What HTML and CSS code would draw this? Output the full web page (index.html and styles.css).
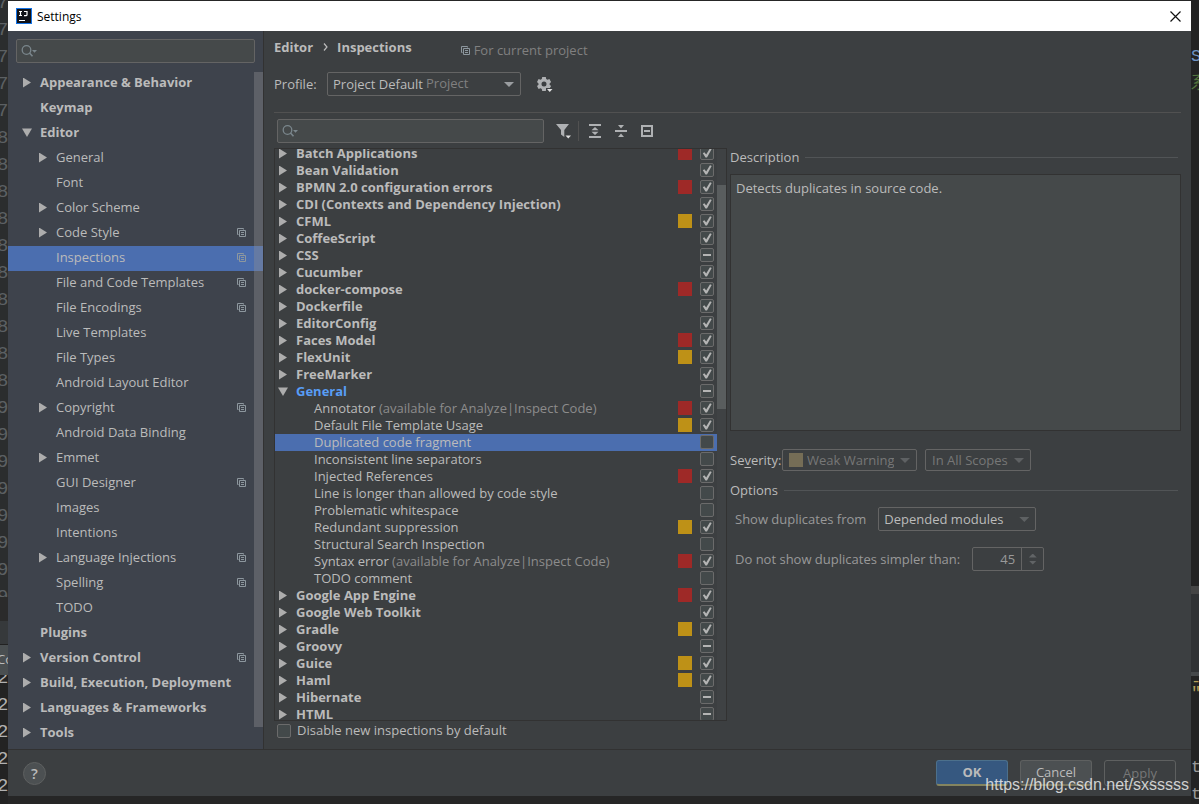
FILE: index.html
```html
<!DOCTYPE html>
<html lang="en">
<head>
<meta charset="utf-8">
<title>Settings</title>
<link rel="stylesheet" href="styles.css">
</head>
<body>
<svg class="sprite" aria-hidden="true">
  <symbol id="copy" viewBox="0 0 9 9"><path d="M1.500 6.500H.5V.5h6v1M2.500 2.500h6v6h-6zM4 4.500h3M4 6.500h3" fill="none" stroke="currentColor"/></symbol>
  <symbol id="search" viewBox="0 0 16 12"><circle cx="5.500" cy="5" r="4.300" fill="none" stroke="currentColor" stroke-width="1.300"/><path d="M8.500 8l3 3.300" stroke="currentColor" stroke-width="1.600"/><path d="M11 5h5l-2.500 2.800z" fill="currentColor"/></symbol>
</svg>
<div class="desktop">
  <div class="strip" aria-hidden="true">
    <div class="gutter dim"><i>7</i><i>7</i><i>7</i><i>7</i><i>7</i><i>8</i><i>8</i><i>8</i><i>8</i><i>8</i><i>8</i><i>8</i><i>8</i><i>8</i><i>8</i><i>9</i><i>9</i><i>9</i><i>9</i><i>9</i><i>9</i><i>9</i><i>9</i></div>
    <div class="toolbar-edge"></div>
    <div class="tab-edge">Co</div>
    <div class="gutter"><i>2</i><i>2</i><i>2</i><i>2</i><i>2</i></div>
  </div>

  <div class="window">
    <header class="titlebar">
      <svg class="logo" viewBox="0 0 16 16"><path d="M0 0h16v16H0z" fill="#1473e6"/><path d="M1 1h14v14H1z" fill="#101218"/><path d="M3 3.500h3M4.500 3.500v4M3 7.500h3M8 3.500h3v3.200q0 1-1.200 1H8M3 12.500h6" fill="none" stroke="#fff" stroke-width="1.200"/></svg>
      <h1>Settings</h1>
      <button class="close" aria-label="Close"><svg viewBox="0 0 11 11"><path d="M.5.5l10 10M10.500.5l-10 10" stroke="#111" stroke-width="1.200"/></svg></button>
    </header>

    <div class="content">
      <nav class="sidebar">
        <div class="field side-search"><svg><use href="#search"/></svg><input type="text" aria-label="Search settings"></div>
        <div class="nav-scroll">
          <ul class="nav">
            <li class="top"><span class="arrow"></span><a href="#">Appearance &amp; Behavior</a></li>
            <li class="top"><a href="#">Keymap</a></li>
            <li class="top"><span class="arrow open"></span><a href="#">Editor</a></li>
            <li><span class="arrow"></span><a href="#">General</a></li>
            <li><a href="#">Font</a></li>
            <li><span class="arrow"></span><a href="#">Color Scheme</a></li>
            <li><span class="arrow"></span><a href="#">Code Style</a><svg><use href="#copy"/></svg></li>
            <li class="selected"><a href="#">Inspections</a><svg><use href="#copy"/></svg></li>
            <li><a href="#">File and Code Templates</a><svg><use href="#copy"/></svg></li>
            <li><a href="#">File Encodings</a><svg><use href="#copy"/></svg></li>
            <li><a href="#">Live Templates</a></li>
            <li><a href="#">File Types</a></li>
            <li><a href="#">Android Layout Editor</a></li>
            <li><span class="arrow"></span><a href="#">Copyright</a><svg><use href="#copy"/></svg></li>
            <li><a href="#">Android Data Binding</a></li>
            <li><span class="arrow"></span><a href="#">Emmet</a></li>
            <li><a href="#">GUI Designer</a><svg><use href="#copy"/></svg></li>
            <li><a href="#">Images</a></li>
            <li><a href="#">Intentions</a></li>
            <li><span class="arrow"></span><a href="#">Language Injections</a><svg><use href="#copy"/></svg></li>
            <li><a href="#">Spelling</a><svg><use href="#copy"/></svg></li>
            <li><a href="#">TODO</a></li>
            <li class="top"><a href="#">Plugins</a></li>
            <li class="top"><span class="arrow"></span><a href="#">Version Control</a><svg><use href="#copy"/></svg></li>
            <li class="top"><span class="arrow"></span><a href="#">Build, Execution, Deployment</a></li>
            <li class="top"><span class="arrow"></span><a href="#">Languages &amp; Frameworks</a></li>
            <li class="top"><span class="arrow"></span><a href="#">Tools</a></li>
          </ul>
          <div class="nav-thumb"></div>
        </div>
      </nav>

      <main class="main">
        <div class="crumbs">
          <b>Editor</b><svg class="chevron" viewBox="0 0 5 8"><path d="M1 .5L4 4 1 7.500" fill="none" stroke="currentColor" stroke-width="1.200"/></svg><b>Inspections</b>
          <span class="scope"><svg><use href="#copy"/></svg>For current project</span>
        </div>
        <div class="profile">
          <label for="profile">Profile:</label>
          <div class="select profile-select"><select id="profile"><option>Project Default</option></select><span class="hint">Project</span></div>
          <button class="icon gear" aria-label="Profile actions"><svg viewBox="0 0 16 16"><path fill="currentColor" fill-rule="evenodd" d="M5.200 1h3.600l.4 2 1.300.8 1.900-.7 1.700 3-1.500 1.300v1.300l1.500 1.300-1.700 3-1.900-.7-1.300.8-.4 1.900H5.200l-.4-1.900-1.300-.8-1.900.7-1.600-3 1.500-1.300V7.400L0 6.100l1.600-3 1.900.7L4.800 3zM7 5.500a2.500 2.500 0 1 0 0 5 2.500 2.500 0 0 0 0-5z"/><path d="M9 12h7v4H9z" fill="#3c3f41"/><path d="M10 13h5.500l-2.750 3z" fill="#e0e0e0"/></svg></button>
        </div>
        <div class="tools">
          <div class="field tree-search"><svg><use href="#search"/></svg><input type="text" aria-label="Search inspections"></div>
          <button class="icon filter" aria-label="Filter"><svg viewBox="0 0 16 16"><path d="M0 1h13L8.300 7v7L5 11.500V7z" fill="currentColor"/><path d="M9.500 12.500H15l-2.700 3z" fill="#e0e0e0"/></svg></button>
          <span class="sep"></span>
          <button class="icon" aria-label="Expand all"><svg viewBox="0 0 14 14"><path d="M1 1h12M1 13h12" stroke="currentColor" stroke-width="2" fill="none"/><path d="M3.500 6.200L7 3l3.500 3.200zM3.500 7.800L7 11l3.500-3.200z" fill="currentColor"/></svg></button>
          <button class="icon" aria-label="Collapse all"><svg viewBox="0 0 14 14"><path d="M1 7h12" stroke="currentColor" stroke-width="2"/><path d="M4 1h6L7 4.500zM4 13h6L7 9.500z" fill="currentColor"/></svg></button>
          <button class="icon" aria-label="Reset"><svg viewBox="0 0 14 14"><path d="M2 2h10v10H2zM4 7h6" fill="none" stroke="currentColor" stroke-width="2"/></svg></button>
        </div>

        <div class="split">
          <section class="left">
            <div class="tree">
              <ul>
                <li><label><span class="arrow"></span><b>Batch Applications</b><i class="red"></i><input type="checkbox" checked></label></li>
                <li><label><span class="arrow"></span><b>Bean Validation</b><input type="checkbox" checked></label></li>
                <li><label><span class="arrow"></span><b>BPMN 2.0 configuration errors</b><i class="red"></i><input type="checkbox" checked></label></li>
                <li><label><span class="arrow"></span><b>CDI (Contexts and Dependency Injection)</b><input type="checkbox" checked></label></li>
                <li><label><span class="arrow"></span><b>CFML</b><i class="amber"></i><input type="checkbox" checked></label></li>
                <li><label><span class="arrow"></span><b>CoffeeScript</b><input type="checkbox" checked></label></li>
                <li><label><span class="arrow"></span><b>CSS</b><input type="checkbox" class="mixed"></label></li>
                <li><label><span class="arrow"></span><b>Cucumber</b><input type="checkbox" checked></label></li>
                <li><label><span class="arrow"></span><b>docker-compose</b><i class="red"></i><input type="checkbox" checked></label></li>
                <li><label><span class="arrow"></span><b>Dockerfile</b><input type="checkbox" checked></label></li>
                <li><label><span class="arrow"></span><b>EditorConfig</b><input type="checkbox" checked></label></li>
                <li><label><span class="arrow"></span><b>Faces Model</b><i class="red"></i><input type="checkbox" checked></label></li>
                <li><label><span class="arrow"></span><b>FlexUnit</b><i class="amber"></i><input type="checkbox" checked></label></li>
                <li><label><span class="arrow"></span><b>FreeMarker</b><input type="checkbox" checked></label></li>
                <li><label><span class="arrow open"></span><b class="changed">General</b><input type="checkbox" class="mixed"></label></li>
                <li class="leaf"><label><span>Annotator <em>(available for Analyze|Inspect Code)</em></span><i class="red"></i><input type="checkbox" checked></label></li>
                <li class="leaf"><label><span>Default File Template Usage</span><i class="amber"></i><input type="checkbox" checked></label></li>
                <li class="leaf selected"><label><span>Duplicated code fragment</span><input type="checkbox"></label></li>
                <li class="leaf"><label><span>Inconsistent line separators</span><input type="checkbox"></label></li>
                <li class="leaf"><label><span>Injected References</span><i class="red"></i><input type="checkbox" checked></label></li>
                <li class="leaf"><label><span>Line is longer than allowed by code style</span><input type="checkbox"></label></li>
                <li class="leaf"><label><span>Problematic whitespace</span><input type="checkbox"></label></li>
                <li class="leaf"><label><span>Redundant suppression</span><i class="amber"></i><input type="checkbox" checked></label></li>
                <li class="leaf"><label><span>Structural Search Inspection</span><input type="checkbox"></label></li>
                <li class="leaf"><label><span>Syntax error <em>(available for Analyze|Inspect Code)</em></span><i class="red"></i><input type="checkbox" checked></label></li>
                <li class="leaf"><label><span>TODO comment</span><input type="checkbox"></label></li>
                <li><label><span class="arrow"></span><b>Google App Engine</b><i class="red"></i><input type="checkbox" checked></label></li>
                <li><label><span class="arrow"></span><b>Google Web Toolkit</b><input type="checkbox" checked></label></li>
                <li><label><span class="arrow"></span><b>Gradle</b><i class="amber"></i><input type="checkbox" checked></label></li>
                <li><label><span class="arrow"></span><b>Groovy</b><input type="checkbox" class="mixed"></label></li>
                <li><label><span class="arrow"></span><b>Guice</b><i class="amber"></i><input type="checkbox" checked></label></li>
                <li><label><span class="arrow"></span><b>Haml</b><i class="amber"></i><input type="checkbox" checked></label></li>
                <li><label><span class="arrow"></span><b>Hibernate</b><input type="checkbox" class="mixed"></label></li>
                <li><label><span class="arrow"></span><b>HTML</b><input type="checkbox" class="mixed"></label></li>
              </ul>
              <div class="track"><div class="thumb"></div></div>
            </div>
            <label class="disable-new"><input type="checkbox">Disable new inspections by default</label>
          </section>

          <section class="right">
            <h2>Description</h2>
            <div class="description">Detects duplicates in source code.</div>
            <div class="severity">
              <label for="severity">Se<u>v</u>erity:</label>
              <div class="select small level"><select id="severity" disabled><option>Weak Warning</option></select><span class="swatch"></span></div>
              <div class="select small scopes"><select aria-label="Scope" disabled><option>In All Scopes</option></select></div>
            </div>
            <h2>Options</h2>
            <div class="option"><label for="from">Show duplicates from</label><div class="select from"><select id="from"><option>Depended modules</option></select></div></div>
            <div class="option"><label for="simpler">Do not show duplicates simpler than:</label><div class="spinner"><input id="simpler" type="text" value="45"><span class="steps"><span class="up"></span><span class="down"></span></span></div></div>
          </section>
        </div>
      </main>
    </div>

    <footer class="footer">
      <button class="help" aria-label="Help">?</button>
      <div class="actions"><button class="btn ok">OK</button><button class="btn cancel">Cancel</button><button class="btn apply" disabled>Apply</button></div>
    </footer>
  </div>

  <div class="strip right-strip" aria-hidden="true">
    <div class="code-edge"><span class="blue">S</span><span class="green">系</span></div>
    <div class="bar-edge"></div>
    <div class="panel-edge"></div>
    <div class="console-edge"><span class="str">-"</span><span>t:</span><span>t:</span></div>
  </div>
  <div class="watermark">https://blog.csdn.net/sxsssss</div>
</div>
</body>
</html>
```
FILE: styles.css
```css
* { box-sizing: border-box; }

body {
  margin: 0;
  background: #2b2b2b;
  color: #bbbbbb;
  font: 13px/17px "Open Sans", "Noto Sans CJK SC", sans-serif;
}

ul { list-style: none; margin: 0; padding: 0; }
button, input, select { font: inherit; color: inherit; margin: 0; }
button { padding: 0; border: 0; background: none; }
a { color: inherit; text-decoration: none; }
h1, h2 { margin: 0; font-size: 13px; font-weight: 400; }
.sprite { position: absolute; width: 0; height: 0; }

.desktop {
  position: relative;
  display: flex;
  height: 100vh;
  overflow: hidden;
  background: #262626;
}

/* Editor visible on both sides of the dialog */
.strip { width: 8px; flex: none; overflow: hidden; display: flex; flex-direction: column; background: #232323; }
.strip > div { flex: none; }
.gutter { font: 19px/27px "Liberation Mono", monospace; color: #b0b0b0; overflow: hidden; }
.gutter.dim { height: 608px; padding-top: 11px; background: #2b2d2e; color: #5c6063; margin-top: -11px; }
.gutter i { display: block; font-style: normal; margin-left: -3px; }
.gutter i:first-child { margin-top: -10px; }
.toolbar-edge { height: 48px; border-top: 24px solid #2b2b2b; background: #36393b; border-bottom: 1px solid #222; }
.tab-edge { height: 30px; background: #4a4f51; line-height: 28px; text-indent: -3px; }
.right-strip { color: #999; font: 17px/27px "Liberation Mono", monospace; }
.code-edge { height: 586px; padding-top: 43px; }
.code-edge span, .console-edge span { display: block; }
.blue { color: #6f93c4; }
.green { color: #55783f; }
.bar-edge { height: 8px; background: #454545; }
.panel-edge { height: 82px; background: #303234; border-bottom: 4px solid #45484a; }
.console-edge .str { color: #b5a05a; margin-bottom: 54px; line-height: 12px; }

.window {
  flex: 1;
  min-width: 0;
  margin: 1px 0 8px;
  display: flex;
  flex-direction: column;
  background: #3c3f41;
}

.titlebar { display: flex; align-items: center; gap: 5px; height: 30px; padding: 0 9px 0 8px; background: #fff; color: #000; }
.titlebar h1 { flex: 1; font-size: 12px; }
.logo { width: 16px; height: 16px; }
.close { width: 12px; height: 12px; }
.close svg { display: block; width: 11px; height: 11px; }

.content { flex: 1; min-height: 0; display: flex; }

.field {
  display: flex;
  align-items: center;
  height: 24px;
  padding: 0 4px;
  border: 1px solid #646464;
  border-radius: 2px;
  background: #45494a;
  color: #7a868c;
}
.field svg { width: 16px; height: 12px; flex: none; }
.field input { flex: 1; min-width: 0; border: 0; background: none; outline: 0; color: #bbb; }

.sidebar { flex: none; width: 256px; display: flex; flex-direction: column; padding-top: 8px; background: #3e434c; border-right: 1px solid #323232; }
.side-search { margin: 0 8px; }
.nav-scroll { position: relative; margin-top: 8px; }
.nav li { display: flex; align-items: center; height: 25px; padding: 0 17px 2px 48px; }
.nav li.top { padding-left: 32px; font-weight: 700; }
.nav a { flex: 1; white-space: nowrap; }
.nav svg { width: 9px; height: 9px; color: #8d979e; }
.nav .arrow { margin: 0 8px 0 -18px; }
.nav .selected { background: #4b6eaf; }
.nav-thumb { position: absolute; right: 0; top: 1px; width: 9px; height: 655px; background: rgba(140, 140, 145, .4); }

.arrow { flex: none; width: 10px; height: 10px; background: #adadad; clip-path: polygon(10% 0, 90% 50%, 10% 100%); }
.arrow.open { clip-path: polygon(0 10%, 100% 10%, 50% 95%); }

.main { flex: 1; min-width: 0; display: flex; flex-direction: column; padding: 0 10px; }
.crumbs { display: flex; align-items: center; height: 32px; }
.chevron { width: 5px; height: 8px; margin: 0 9px 0 10px; }
.scope { display: flex; align-items: center; gap: 4px; margin: 6px 0 0 49px; color: #808080; }
.scope svg { width: 9px; height: 9px; color: #8d979e; }

.profile { display: flex; align-items: center; height: 50px; padding-bottom: 7px; border-bottom: 1px solid #515151; }
.profile label { width: 53px; }

.select { position: relative; display: flex; height: 24px; }
.select select {
  width: 100%;
  appearance: none;
  padding: 0 22px 0 5px;
  border: 1px solid #646464;
  border-radius: 2px;
  background: #3c3f41;
  opacity: 1;
}
.select::after { content: ""; position: absolute; right: 7px; top: 10px; width: 10px; height: 5px; background: #9a9da0; clip-path: polygon(0 0, 100% 0, 50% 100%); }
.profile-select { width: 194px; }
.hint { position: absolute; left: 99px; top: 3px; color: #808080; }
.gear { margin-left: 16px; }
.icon svg { display: block; width: 14px; height: 14px; color: #afb1b3; }
.icon.gear svg, .icon.filter svg { width: 16px; height: 16px; }

.tools { display: flex; align-items: center; gap: 12px; height: 35px; padding-left: 3px; }
.tree-search { width: 267px; }
.sep { width: 1px; height: 20px; background: #515151; margin: 0 -3px 0 -6px; }

.split { flex: 1; min-height: 0; display: grid; grid-template-columns: 453fr 451fr; gap: 3px; }
.left { display: flex; flex-direction: column; min-height: 0; }
.tree { flex: 1; min-height: 0; display: flex; overflow: hidden; border: 1px solid #323232; }
.tree ul { flex: 1; min-width: 0; margin-top: -4px; }
.tree li { height: 17px; padding: 0 3px 0 3px; white-space: nowrap; }
.tree label { display: flex; align-items: center; height: 17px; }
.tree .arrow { margin-right: 8px; }
.tree b, .tree label > span:not(.arrow) { flex: 1; }
.tree em { font-style: normal; color: #8c8c8c; }
.tree .leaf { padding-left: 39px; }
.tree .selected { background: #4b6eaf; }
.changed { color: #589df6; }
.tree i { width: 14px; height: 14px; margin: 0 8px 1px 0; }
.tree input { margin-bottom: 1px; }
.red { background: #9e2927; }
.amber { background: #be9117; }
.track { width: 9px; flex: none; background: #3f4244; padding-top: 36px; }
.thumb { height: 224px; background: #595d5e; }

input[type="checkbox"] {
  flex: none;
  appearance: none;
  display: grid;
  place-items: center;
  width: 14px;
  height: 14px;
  border: 1px solid #6b6b6b;
  border-radius: 2px;
  background: #43494a;
}
input[type="checkbox"]:checked::before { content: ""; width: 10px; height: 10px; background: #b4b4b4; clip-path: polygon(8% 52%, 24% 42%, 42% 65%, 80% 2%, 97% 10%, 50% 95%, 35% 95%); }
.mixed::before { content: ""; width: 8px; height: 2px; background: #b4b4b4; }
.disable-new { display: flex; align-items: center; gap: 6px; height: 28px; padding: 0 0 9px 3px; }

.right h2 { display: flex; align-items: center; height: 18px; margin-right: 3px; }
.right h2::after { content: ""; flex: 1; height: 1px; margin-left: 6px; background: #515456; }
.description { height: 257px; margin-top: 8px; padding: 5px; border: 1px solid #323232; background: #45494a; }
.severity { display: flex; align-items: center; margin: 18px 0 10px; }
.severity label { width: 52px; }
.severity u { text-underline-offset: 2px; }
.small { height: 22px; color: #777; }
.small::after, .from::after { background: #5e6163; }
.small::after { top: 9px; }
.level { width: 135px; margin-right: 8px; }
.level select { padding-left: 24px; }
.swatch { position: absolute; left: 7px; top: 4px; width: 14px; height: 14px; background: #756d56; }
.scopes { width: 106px; }
.scopes select { padding-left: 6px; }
.option { display: flex; align-items: center; gap: 12px; height: 40px; padding-left: 5px; color: #999; }
.from { width: 158px; color: #bbb; }
.spinner { display: flex; width: 72px; height: 24px; border: 1px solid #646464; border-radius: 2px; }
.spinner input { flex: 1; min-width: 0; padding: 0 6px 0 0; border: 0; background: none; text-align: right; }
.steps { width: 22px; display: flex; flex-direction: column; align-items: center; justify-content: center; gap: 3px; border-left: 1px solid #646464; }
.steps span { width: 8px; height: 4px; background: #616466; }
.up { clip-path: polygon(50% 0, 100% 100%, 0 100%); }
.down { clip-path: polygon(0 0, 100% 0, 50% 100%); }

.footer { flex: none; display: flex; align-items: center; justify-content: space-between; height: 47px; padding: 0 15px; border-top: 1px solid #323232; }
.help { width: 23px; height: 23px; border: 1px solid #5e6060; border-radius: 50%; background: #4c5052; font-size: 15px; font-weight: 600; line-height: 21px; }
.actions { display: flex; gap: 12px; }
.btn { width: 72px; height: 26px; border: 1px solid #5e6060; border-radius: 3px; background: #4c5052; }
.ok { background: #365880; border-color: #4c708c; font-weight: 700; border-bottom: 2px solid #84845f; }
.cancel { border-bottom: 2px solid #77755f; }
.apply { background: none; color: #777; }

.watermark { position: absolute; right: 10px; bottom: 9px; font: 16px/20px "Liberation Sans", sans-serif; color: rgba(235, 235, 235, .85); }
```
